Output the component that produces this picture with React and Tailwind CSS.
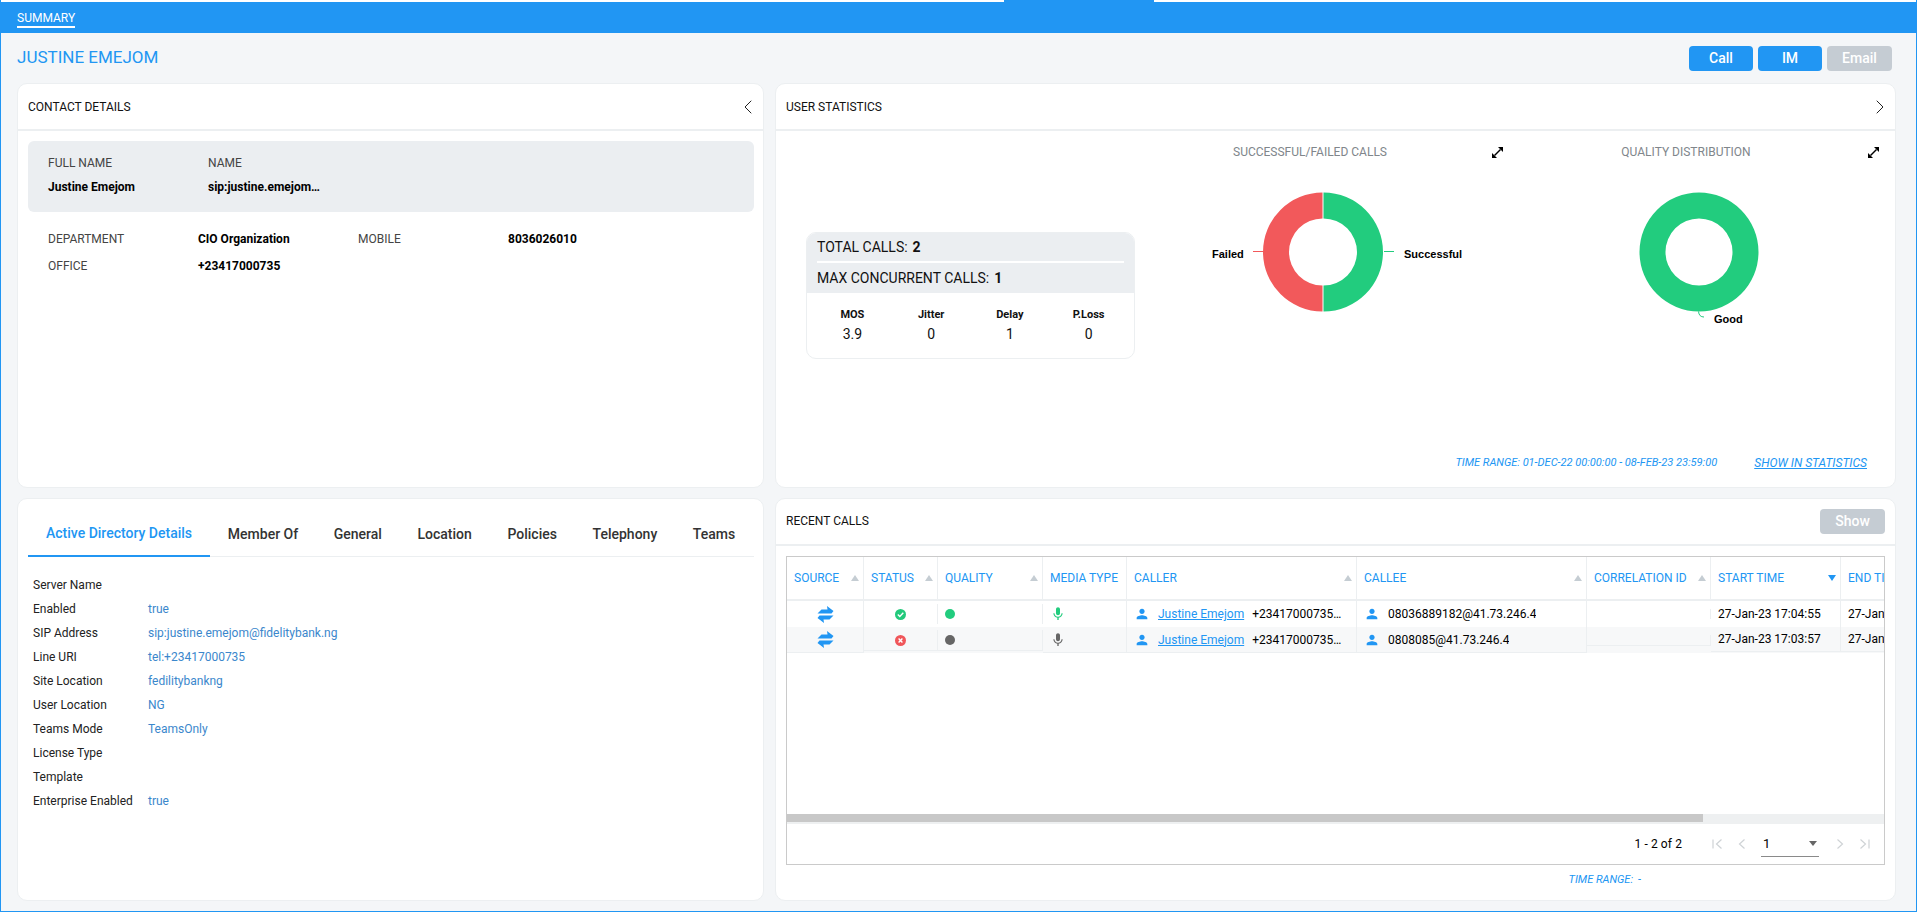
import { MdMic, MdPerson } from 'react-icons/md'
import { ChevronLeft, ChevronRight } from 'lucide-react'

const adRows = [
  ['Server Name', ''],
  ['Enabled', 'true'],
  ['SIP Address', 'sip:justine.emejom@fidelitybank.ng'],
  ['Line URI', 'tel:+23417000735'],
  ['Site Location', 'fedilitybankng'],
  ['User Location', 'NG'],
  ['Teams Mode', 'TeamsOnly'],
  ['License Type', ''],
  ['Template', ''],
  ['Enterprise Enabled', 'true'],
]

const tabs = ['Member Of', 'General', 'Location', 'Policies', 'Telephony', 'Teams']

const columns = [
  { label: 'SOURCE', w: 'w-[77px]', sort: true },
  { label: 'STATUS', w: 'w-[74px]', sort: true },
  { label: 'QUALITY', w: 'w-[105px]', sort: true },
  { label: 'MEDIA TYPE', w: 'w-[84px]' },
  { label: 'CALLER', w: 'w-[230px]', sort: true },
  { label: 'CALLEE', w: 'w-[230px]', sort: true },
  { label: 'CORRELATION ID', w: 'w-[124px]', sort: true },
  { label: 'START TIME', w: 'w-[130px]', active: true },
  { label: 'END TIME', w: 'w-[130px]' },
]

const calls = [
  { ok: true, callee: '08036889182@41.73.246.4', start: '27-Jan-23 17:04:55' },
  { ok: false, callee: '0808085@41.73.246.4', start: '27-Jan-23 17:03:57' },
]

function SourceIcon() {
  return (
    <svg width="17" height="17" viewBox="0 0 17 17" fill="#2196f3">
      <path d="M0.5 7.6 L4.5 3.4 H10.5 L10 0 L16.5 5 L14.5 7.6 Z" />
      <path d="M16.5 9.4 L12.5 13.6 H6.5 L7 17 L0.5 12 L2.5 9.4 Z" />
    </svg>
  )
}

function StatusIcon({ ok }) {
  return (
    <svg width="11" height="11" viewBox="0 0 11 11">
      <circle cx="5.5" cy="5.5" r="5.5" fill={ok ? '#22c97b' : '#f0565a'} />
      {ok ? (
        <path d="M2.8 5.6 L4.8 7.5 L8.3 3.8" fill="none" stroke="#fff" strokeWidth="1.4" />
      ) : (
        <path d="M3.6 3.6 L7.4 7.4 M7.4 3.6 L3.6 7.4" fill="none" stroke="#fff" strokeWidth="1.4" />
      )}
    </svg>
  )
}

function ExpandIcon() {
  return (
    <svg width="11" height="11" viewBox="0 0 11 11" fill="#000">
      <path d="M11 0 V5 L6 0 Z" />
      <path d="M0 11 V6 L5 11 Z" />
      <path d="M2.5 8.5 L8.5 2.5" stroke="#000" strokeWidth="1.4" fill="none" />
    </svg>
  )
}

function Card({ children, className = '' }) {
  return (
    <div className={`flex flex-col bg-white border border-[#eceff1] rounded-[10px] min-h-0 ${className}`}>
      {children}
    </div>
  )
}

function CardHeader({ title, children }) {
  return (
    <div className="h-[47px] shrink-0 flex items-center justify-between pl-[10px] pr-[3px] border-b-2 border-[#eceff1]">
      <span className="text-[12px] text-[#111]">{title}</span>
      {children}
    </div>
  )
}

function Info({ label, value, labelW, valueW }) {
  return (
    <div className="flex items-center">
      <span className={`${labelW} text-[12px] text-[#444]`}>{label}</span>
      <span className={`${valueW} text-[12px] font-bold text-black`}>{value}</span>
    </div>
  )
}

function ContactDetails() {
  return (
    <Card>
      <CardHeader title="CONTACT DETAILS">
        <ChevronLeft size={24} strokeWidth={1} className="text-[#222]" />
      </CardHeader>
      <div className="pt-[10px] pl-[10px] pr-[9px]">
        <div className="h-[71px] bg-[#ebeef1] rounded-[6px] pl-[20px] flex gap-0 pt-[14px]">
          <div className="w-[160px]">
            <div className="text-[12px] text-[#444] leading-[16px]">FULL NAME</div>
            <div className="text-[12px] font-bold text-black leading-[16px] mt-[8px]">Justine Emejom</div>
          </div>
          <div className="w-[112px]">
            <div className="text-[12px] text-[#444] leading-[16px]">NAME</div>
            <div className="text-[12px] font-bold text-black leading-[16px] mt-[8px] truncate">sip:justine.emejom@fidelitybank.ng</div>
          </div>
        </div>
        <div className="pl-[20px] mt-[19px] flex flex-col gap-[11px]">
          <div className="flex leading-[16px]">
            <Info label="DEPARTMENT" value="CIO Organization" labelW="w-[150px]" valueW="w-[160px]" />
            <Info label="MOBILE" value="8036026010" labelW="w-[150px]" valueW="w-[120px]" />
          </div>
          <div className="flex leading-[16px]">
            <Info label="OFFICE" value="+23417000735" labelW="w-[150px]" valueW="w-[160px]" />
          </div>
        </div>
      </div>
    </Card>
  )
}

function Donut({ good }) {
  const cx = 188
  const cy = 62
  const R = 59.5
  const r = 33.5
  return (
    <svg width="376" height="140" viewBox="0 0 376 140" className="overflow-visible">
      {good ? (
        <>
          <path
            fillRule="evenodd"
            fill="#22cc7e"
            d={`M${cx} ${cy - R}a${R} ${R} 0 1 1 0 ${R * 2}a${R} ${R} 0 1 1 0 ${-R * 2}ZM${cx} ${cy - r}a${r} ${r} 0 1 0 0 ${r * 2}a${r} ${r} 0 1 0 0 ${-r * 2}Z`}
          />
          <path d="M187.5 121.5 Q188 127 193 127" fill="none" stroke="#22cc7e" strokeWidth="1" />
          <text x="203" y="133" className="font-['Liberation_Sans',sans-serif] text-[11px] font-bold fill-black">Good</text>
        </>
      ) : (
        <>
          <path fill="#22cc7e" d={`M${cx + 0.5} ${cy - R}a${R} ${R} 0 0 1 0 ${R * 2}v${-(R - r)}a${r} ${r} 0 0 0 0 ${-r * 2}Z`} />
          <path fill="#f2595b" d={`M${cx - 0.5} ${cy - R}a${R} ${R} 0 0 0 0 ${R * 2}v${-(R - r)}a${r} ${r} 0 0 1 0 ${-r * 2}Z`} />
          <path d="M118 61.5 H129" stroke="#f2595b" strokeWidth="1" />
          <path d="M249 61.5 H259" stroke="#22cc7e" strokeWidth="1" />
          <text x="77" y="68" className="font-['Liberation_Sans',sans-serif] text-[11px] font-bold fill-black">Failed</text>
          <text x="269" y="68" className="font-['Liberation_Sans',sans-serif] text-[11px] font-bold fill-black">Successful</text>
        </>
      )}
    </svg>
  )
}

function ChartCol({ title, good }) {
  return (
    <div className="w-[376px] shrink-0">
      <div className="flex items-center h-[16px] mt-[13px]">
        <div className="w-[350px] text-center text-[12px] text-[#80868b]">{title}</div>
        <div className="w-[24px] flex justify-center"><ExpandIcon /></div>
      </div>
      <div className="mt-[30px]">
        <Donut good={good} />
      </div>
    </div>
  )
}

function Metric({ label, value }) {
  return (
    <div className="text-center">
      <div className="text-[11px] font-bold text-[#111] leading-[14px]">{label}</div>
      <div className="text-[14px] text-[#111] leading-[16px] mt-[4px]">{value}</div>
    </div>
  )
}

function UserStatistics() {
  return (
    <Card>
      <CardHeader title="USER STATISTICS">
        <ChevronRight size={24} strokeWidth={1} className="text-[#222]" />
      </CardHeader>
      <div className="flex flex-1 min-h-0">
        <div className="w-[359px] shrink-0 pl-[30px] pt-[101px]">
          <div className="h-[127px] border border-[#eceff1] rounded-[10px] overflow-hidden">
            <div className="h-[60px] bg-[#ebeef1] px-[10px]">
              <div className="h-[30px] flex items-center text-[14px] text-[#111] border-b-2 border-white">
                TOTAL CALLS:<span className="font-bold ml-[5px]">2</span>
              </div>
              <div className="h-[30px] flex items-center text-[14px] text-[#111]">
                MAX CONCURRENT CALLS:<span className="font-bold ml-[5px]">1</span>
              </div>
            </div>
            <div className="grid grid-cols-4 px-[6px] pt-[15px]">
              <Metric label="MOS" value="3.9" />
              <Metric label="Jitter" value="0" />
              <Metric label="Delay" value="1" />
              <Metric label="P.Loss" value="0" />
            </div>
          </div>
        </div>
        <ChartCol title="SUCCESSFUL/FAILED CALLS" />
        <ChartCol title="QUALITY DISTRIBUTION" good />
      </div>
      <div className="flex justify-end items-center gap-[37px] pr-[28px] pb-[15px] italic text-[#2196f3]">
        <span className="text-[11px]">TIME RANGE: 01-DEC-22 00:00:00 - 08-FEB-23 23:59:00</span>
        <span className="text-[12px] underline">SHOW IN STATISTICS</span>
      </div>
    </Card>
  )
}

function DirectoryDetails() {
  return (
    <Card>
      <div className="ml-[10px] mr-[9px] mt-[19px] flex border-b border-[#eceff1] h-[39px] shrink-0">
        <div className="h-[39px] px-[18px] pb-[6px] flex items-center whitespace-nowrap text-[14px] font-medium text-[#2196f3] border-b-2 border-[#2196f3]">
          Active Directory Details
        </div>
        {tabs.map(t => (
          <div key={t} className="h-[39px] px-[17.8px] pb-[6px] flex items-center whitespace-nowrap text-[14px] font-medium text-[#333]">
            {t}
          </div>
        ))}
      </div>
      <div className="pl-[15px] pt-[16px]">
        {adRows.map(([k, v]) => (
          <div key={k} className="flex items-center h-[24px] text-[12px]">
            <span className="w-[115px] text-[#222]">{k}</span>
            <span className="text-[#3b87cc]">{v}</span>
          </div>
        ))}
      </div>
    </Card>
  )
}

function CallRow({ call, idx }) {
  const alt = idx === 1
  const lineB = alt ? 'border-b border-[#eceff1]' : ''
  return (
    <div className={`flex h-[26px] text-[12px] text-black ${alt ? 'bg-[#f7f8f9]' : ''}`}>
      <div className={`w-[77px] shrink-0 flex items-center justify-center border-r border-[#eceff1] ${lineB}`}>
        <SourceIcon />
      </div>
      <div className={`w-[74px] shrink-0 ${alt ? 'h-[24px] border-b border-[#eceff1]' : ''}`}>
        <div className={`h-[20px] mt-[3px] flex items-center justify-center border-r border-[#eceff1]`}>
          <StatusIcon ok={call.ok} />
        </div>
      </div>
      <div className={`w-[105px] shrink-0 ${alt ? 'h-[24px] border-b border-[#eceff1]' : ''}`}>
        <div className="h-[20px] mt-[3px] pl-[7px] flex items-center border-r border-[#eceff1]">
          <span className={`w-[10px] h-[10px] rounded-full ${call.ok ? 'bg-[#22cc7e]' : 'bg-[#666]'}`} />
        </div>
      </div>
      <div className={`w-[84px] shrink-0 pl-[7px] flex items-center border-r border-[#eceff1] ${lineB}`}>
        <MdMic size={16} className={call.ok ? 'text-[#22cc7e]' : 'text-[#666]'} />
      </div>
      <div className={`w-[230px] shrink-0 pl-[7px] pr-[14px] flex items-center border-r border-[#eceff1] ${lineB}`}>
        <MdPerson size={16} className="text-[#2196f3] shrink-0" />
        <span className="ml-[8px] text-[#2196f3] underline shrink-0">Justine Emejom</span>
        <span className="ml-[8px] truncate">+23417000735;ext=1</span>
      </div>
      <div className={`w-[230px] shrink-0 pl-[7px] flex items-center border-r border-[#eceff1] ${lineB}`}>
        <MdPerson size={16} className="text-[#2196f3] shrink-0" />
        <span className="ml-[8px] truncate">{call.callee}</span>
      </div>
      <div className={`w-[124px] shrink-0 ${alt ? 'h-[19px] border-b border-[#eceff1]' : ''}`}>
        <div className="h-[10px] mt-[8px] border-r border-[#eceff1]" />
      </div>
      <div className={`w-[130px] shrink-0 pl-[7px] flex items-center border-r border-[#eceff1] ${alt ? 'h-[25px] border-b' : ''}`}>
        {call.start}
      </div>
      <div className={`w-[130px] shrink-0 pl-[7px] flex items-center ${alt ? 'h-[25px] border-b border-[#eceff1]' : ''}`}>
        {call.start}
      </div>
    </div>
  )
}

function RecentCalls() {
  return (
    <Card>
      <div className="h-[47px] shrink-0 flex items-center justify-between pl-[10px] pr-[10px] border-b-2 border-[#eceff1]">
        <span className="text-[12px] text-[#111] -mt-[2px]">RECENT CALLS</span>
        <button className="w-[65px] h-[25px] rounded-[4px] bg-[#c5ccd3] text-white text-[14px] font-medium">Show</button>
      </div>
      <div className="mx-[10px] mt-[10px] h-[309px] border border-[#cacaca] flex flex-col overflow-hidden">
        <div className="flex-1 overflow-hidden">
          <div className="flex h-[44px] w-[1184px] border-b-2 border-[#eceff1]">
            {columns.map(c => (
              <div key={c.label} className={`${c.w} shrink-0 pl-[7px] pr-[4px] flex items-center justify-between border-r border-[#eceff1] text-[12px] text-[#2196f3]`}>
                <span className="whitespace-nowrap">{c.label}</span>
                {c.sort && <span className="w-0 h-0 border-x-[4px] border-x-transparent border-b-[6px] border-b-[#c5cdd3]" />}
                {c.active && <span className="w-0 h-0 border-x-[4px] border-x-transparent border-t-[6px] border-t-[#2196f3]" />}
              </div>
            ))}
          </div>
          <div className="w-[1184px]">
            {calls.map((c, i) => <CallRow key={c.start} call={c} idx={i} />)}
          </div>
        </div>
        <div className="h-[10px] shrink-0 bg-[#eef0f1]">
          <div className="w-[916px] h-[8px] bg-[#c8c8c8]" />
        </div>
        <div className="h-[40px] shrink-0 flex items-center justify-end pr-[13px] text-[12px] text-black">
          <span className="tracking-[0.1px]">1 - 2 of 2</span>
          <div className="flex items-center text-[#cfd3d6] ml-[29px]">
            <svg width="14" height="14" viewBox="0 0 14 14" fill="none" stroke="currentColor" strokeWidth="1.2">
              <path d="M2 2.5 V11.5 M10.5 2.5 L5.5 7 L10.5 11.5" />
            </svg>
            <svg width="14" height="14" viewBox="0 0 14 14" fill="none" stroke="currentColor" strokeWidth="1.2" className="ml-[10px]">
              <path d="M9.5 2.5 L4.5 7 L9.5 11.5" />
            </svg>
            <div className="ml-[12px] w-[58px] h-[26px] pl-[2px] pr-[2px] flex items-center justify-between border-b border-[#8a8a8a] text-black text-[13px]">
              <span>1</span>
              <span className="w-0 h-0 border-x-[4px] border-x-transparent border-t-[5px] border-t-[#666]" />
            </div>
            <svg width="14" height="14" viewBox="0 0 14 14" fill="none" stroke="currentColor" strokeWidth="1.2" className="ml-[14px]">
              <path d="M4.5 2.5 L9.5 7 L4.5 11.5" />
            </svg>
            <svg width="14" height="14" viewBox="0 0 14 14" fill="none" stroke="currentColor" strokeWidth="1.2" className="ml-[10px]">
              <path d="M3.5 2.5 L8.5 7 L3.5 11.5 M12 2.5 V11.5" />
            </svg>
          </div>
        </div>
      </div>
      <div className="flex-1 flex items-center justify-end pr-[254px] pb-[4px] text-[11px] italic text-[#2196f3]">
        <span>TIME RANGE:</span>
        <span className="ml-[5px]">-</span>
      </div>
    </Card>
  )
}

export default function App() {
  return (
    <div className="h-[912px] w-[1917px] overflow-hidden border-x border-b border-[#2196f3] bg-[#f4f6f8] flex flex-col font-['Roboto',sans-serif]">
      <div className="h-[2px] shrink-0 flex">
        <div className="w-[1003px] bg-white" />
        <div className="w-[150px] bg-[#2196f3]" />
        <div className="flex-1 bg-white" />
      </div>
      <div className="h-[31px] shrink-0 bg-[#2196f3] pl-[16px] flex items-start">
        <span className="mt-[9px] h-[17px] leading-[14px] text-[12px] text-white border-b-2 border-white">SUMMARY</span>
      </div>
      <div className="h-[50px] shrink-0 flex items-center justify-between pl-[16px] pr-[24px]">
        <h1 className="text-[17px] font-normal text-[#2196f3]">JUSTINE EMEJOM</h1>
        <div className="flex gap-[5px] mt-[1px]">
          <button className="w-[64px] h-[25px] rounded-[4px] bg-[#2196f3] text-white text-[14px] font-medium">Call</button>
          <button className="w-[64px] h-[25px] rounded-[4px] bg-[#2196f3] text-white text-[14px] font-medium">IM</button>
          <button className="w-[65px] h-[25px] rounded-[4px] bg-[#c5ccd3] text-white text-[14px] font-medium">Email</button>
        </div>
      </div>
      <div className="ml-[16px] grid grid-cols-[747px_1121px] grid-rows-[405px_403px] gap-x-[11px] gap-y-[10px]">
        <ContactDetails />
        <UserStatistics />
        <DirectoryDetails />
        <RecentCalls />
      </div>
    </div>
  )
}
